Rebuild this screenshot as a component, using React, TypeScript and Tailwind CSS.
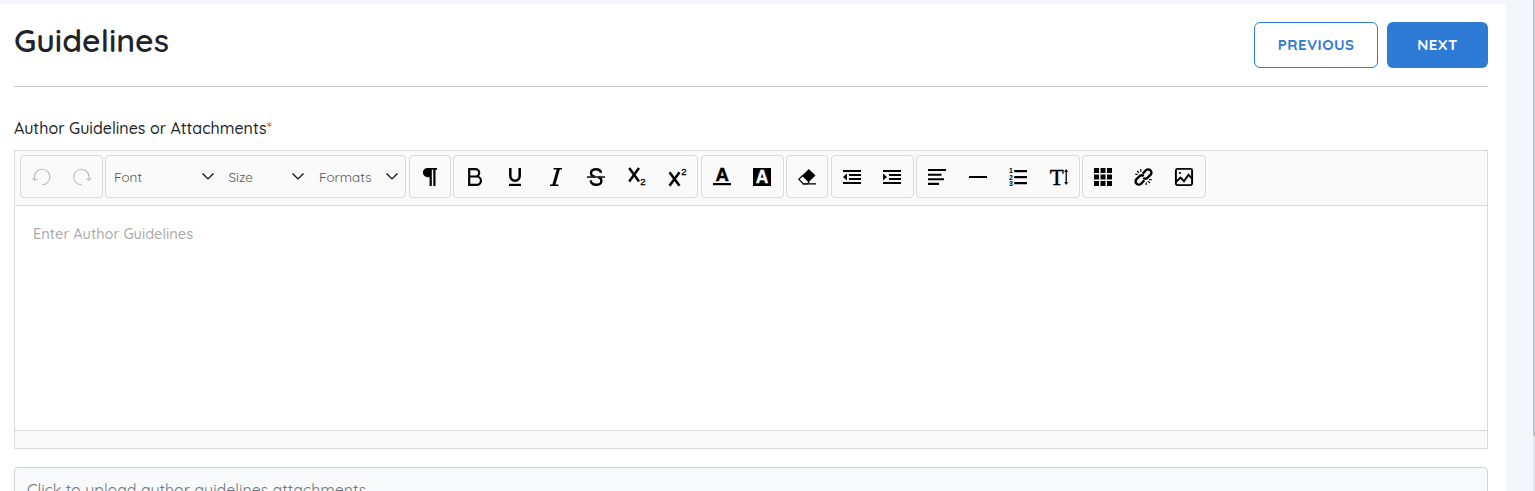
import type { ReactNode } from 'react';

function Icon({ children, className = 'text-black' }: { children: ReactNode; className?: string }) {
  return (
    <svg width="18" height="18" viewBox="0 0 18 18" fill="currentColor" overflow="visible" className={className} aria-hidden="true">
      {children}
    </svg>
  );
}

const sans = "'Liberation Sans', Arial, sans-serif";
const serif = "'Liberation Serif', 'Times New Roman', serif";

const line = { fill: 'none', stroke: 'currentColor' };

const undo = (
  <Icon className="text-[#bdbdbd]">
    <path {...line} strokeWidth="1.1" d="M9.8 16.7A7.7 7.7 0 1 0 2.500 9v3.2M.3 10.2 2.500 12.4l2.8-1.6" />
  </Icon>
);
const redo = (
  <Icon className="text-[#bdbdbd]">
    <path {...line} strokeWidth="1.1" d="M8.7 16.7A7.7 7.7 0 1 1 16 9v3.2M18.2 10.2 16 12.4l-2.8-1.6" />
  </Icon>
);
const pilcrow = (
  <Icon>
    <path d="M6 0H16v1.800h-1.500V18h-2.200V1.800H10.800V18H8.600V9.200H6.500A4.600 4.600 0 0 1 6.500 0z" />
  </Icon>
);
const bold = (
  <Icon>
    <path {...line} strokeWidth="2.200" d="M3.200 1.100H9.500a3.600 3.600 0 0 1 0 7.400H3.200M9.500 8.500h1.200a4.200 4.200 0 0 1 0 8.400H3.200V0" />
  </Icon>
);
const underline = (
  <Icon>
    <path {...line} strokeWidth="2.500" d="M4.300 0v8a4.700 4.700 0 0 0 9.400 0V0" />
    <path d="M3 15.800h12V18H3z" />
  </Icon>
);
const italic = (
  <Icon>
    <path {...line} strokeWidth="1.400" d="M6.500.7H15M3 17.300h8.500" />
    <path {...line} strokeWidth="3" d="M11.500.6 6.700 17.400" />
  </Icon>
);
const strike = (
  <Icon>
    <path {...line} strokeWidth="2.400" d="M14 4.800C13.700 2.400 12 1.200 9 1.200S4 2.600 4 4.900c0 2 1.500 3.300 4 3.800M3.700 12.400c.3 2.900 2.300 4.400 5.500 4.400s5.200-1.500 5.200-3.900c0-1.900-1-3-3.300-3.700" />
    <path d="M0 8.200h18v1.700H0z" fill="#222" />
  </Icon>
);
const subscript = (
  <Icon>
    <path {...line} strokeWidth="2.500" d="M2.200 0 12 13.500M12 0 2.200 13.500" />
    <text x="13.200" y="16.800" fontFamily={sans} fontSize="9.500" stroke="currentColor" strokeWidth=".3">2</text>
  </Icon>
);
const superscript = (
  <Icon>
    <path {...line} strokeWidth="2.500" d="M1.500 4.200 11.500 17.800M11.500 4.200 1.500 17.800" />
    <text x="13.200" y="6.600" fontFamily={sans} fontSize="9.500" stroke="currentColor" strokeWidth=".3">2</text>
  </Icon>
);
const fontColor = (
  <Icon>
    <text x="9.200" y="13.300" textAnchor="middle" fontFamily={sans} fontSize="18.500" fontWeight="700" stroke="currentColor" strokeWidth=".4">A</text>
    <path d="M0 15h18v2.200H0z" />
  </Icon>
);
const highlight = (
  <Icon>
    <path d="M0 0h18v18H0z" />
    <text x="9" y="15.400" textAnchor="middle" fontFamily={sans} fontSize="17.500" fontWeight="700" fill="#fff" stroke="#fff" strokeWidth=".3">A</text>
  </Icon>
);
const eraser = (
  <Icon>
    <path d="M10.800 1 17.500 7.500 10.500 14.300 4 7.700z" />
    <path {...line} strokeWidth="1.200" d="M5 7.200.8 11.200l4.500 4.600h3.900l2-2" />
    <path d="M4.700 15.100H18v1.500H4.700z" fill="#222" />
  </Icon>
);
const outdent = (
  <Icon>
    <path d="M0 2h18v2H0zM6 6h12v2H6zM6 10h12v2H6zM0 14h18v2H0zM4 5.500v7L0 9z" />
  </Icon>
);
const indent = (
  <Icon>
    <path d="M0 2h18v2H0zM6 6h12v2H6zM6 10h12v2H6zM0 14h18v2H0zM0 5.500v7L4 9z" />
  </Icon>
);
const align = (
  <Icon>
    <path d="M0 1h18v2.100H0zM0 5.700h13.500v2.100H0zM0 10.200h16v2.100H0zM0 14.800h11v2.100H0z" />
  </Icon>
);
const rule = (
  <Icon>
    <path d="M0 8h18v2H0z" />
  </Icon>
);
const list = (
  <Icon>
    <path d="M5.200 2H18v2.200H5.200zM5.200 8H18v2.200H5.200zM5.200 14H18v2.200H5.200z" />
    <g fontFamily={sans} fontSize="7" fontWeight="700">
      <text x="0" y="5">1</text>
      <text x="0" y="11.500">2</text>
      <text x="0" y="18">3</text>
    </g>
  </Icon>
);
const lineHeight = (
  <Icon>
    <text x="-.3" y="16.700" fontFamily={serif} fontSize="23" stroke="currentColor" strokeWidth=".4">T</text>
    <path {...line} strokeWidth="1.300" d="M16.200 2v14" />
    <path d="M14.200 4 16.200 1l2 3zM14.200 14 16.200 17l2-3z" />
  </Icon>
);
const table = (
  <Icon>
    <path d="M0 0h5v5H0zM6.500 0h5v5h-5zM13 0h5v5h-5zM0 6.500h5v5H0zM6.500 6.500h5v5h-5zM13 6.500h5v5h-5zM0 13h5v5H0zM6.500 13h5v5h-5zM13 13h5v5h-5z" />
  </Icon>
);
const link = (
  <Icon>
    <g transform="translate(.5 0)">
      <path {...line} strokeWidth="2.400" d="M8.200 5.700 11.400 2.300A3.200 3.200 0 0 1 16 6.800l-2.900 2.900a3.300 3.300 0 0 1-4.300.2M9.800 12.300 6.600 15.700A3.200 3.200 0 0 1 2 11.200l2.900-2.900a3.300 3.300 0 0 1 4.300-.2" />
      <path {...line} strokeWidth="1.200" d="M6.300 1v2.700M2.600 2.800l2 2.100M.8 6.300h2.500M11.700 14.300V17M13.500 13.100l2 2.100M14.700 11.700h2.500" />
    </g>
  </Icon>
);
const image = (
  <Icon>
    <rect x=".9" y=".9" width="16.200" height="16.200" rx="1.500" {...line} strokeWidth="1.900" />
    <path {...line} strokeWidth="1.900" d="m1.500 13.500 4-4 3.500 3.700 4.500-6.500 3.500 4" />
    <circle cx="5" cy="5" r="1.100" />
  </Icon>
);

const groups: { width: string; icons: ReactNode[] }[] = [
  { width: 'w-[42px] ml-[3px]', icons: [pilcrow] },
  { width: 'w-[245px] ml-[2px] pl-px', icons: [bold, underline, italic, strike, subscript, superscript] },
  { width: 'w-[83px] ml-[3px] pr-px', icons: [fontColor, highlight] },
  { width: 'w-[42px] ml-[2px]', icons: [eraser] },
  { width: 'w-[83px] ml-[3px] pr-px', icons: [outdent, indent] },
  { width: 'w-[164px] ml-[2px]', icons: [align, rule, list, lineHeight] },
  { width: 'w-[124px] ml-[2px] pr-px', icons: [table, link, image] },
];

function Group({ width, icons }: { width: string; icons: ReactNode[] }) {
  return (
    <div className={`flex h-[43px] shrink-0 rounded border border-[#dadada] ${width}`}>
      {icons.map((icon, i) => (
        <button key={i} type="button" className="flex flex-1 items-center justify-center pb-px pt-0.5">
          {icon}
        </button>
      ))}
    </div>
  );
}

function Select({ label, className }: { label: string; className: string }) {
  return (
    <button type="button" className={`flex items-center justify-between text-[13.5px] font-normal text-[#555] ${className}`}>
      <span className="pt-0.5">{label}</span>
      <svg width="12" height="7" viewBox="0 0 12 7" fill="none" stroke="#111" strokeWidth="1.4" aria-hidden="true">
        <path d="m.5.6 5.500 5.300L11.500.6" />
      </svg>
    </button>
  );
}

export default function App() {
  return (
    <div className="flex h-[491px] w-full overflow-hidden bg-[#f4f6fb] font-['Quicksand','Lato',sans-serif] text-[#212529]">
      <main className="mt-1 w-[1506px] shrink-0 rounded-tr bg-white pl-3.5 pr-[18px]">
        <header className="flex h-[83px] items-start justify-between border-b border-[#c5c5c5] pt-[18px]">
          <h1 className="text-[32px] font-semibold leading-[37px]">Guidelines</h1>
          <div className="flex gap-[9px] text-[15px] font-bold">
            <button type="button" className="h-[46px] w-[124px] rounded-md border border-[#2e7bd5] tracking-[0.45px] text-[#2e7bd5]">
              PREVIOUS
            </button>
            <button type="button" className="h-[46px] w-[101px] rounded-md bg-[#2e7bd5] tracking-[0.45px] text-white">
              NEXT
            </button>
          </div>
        </header>

        <label className="mt-[29px] block h-6 text-[16px] font-medium leading-6 tracking-[0.01px]">
          Author Guidelines or Attachments<span className="text-[#f4503a]">*</span>
        </label>

        <section className="mt-[10px] flex h-[299px] flex-col border border-[#dadada]">
          <div className="flex h-[55px] shrink-0 border-b border-[#dadada] bg-[#fafafa] pl-[5px] pt-1">
            <Group width="w-[83px]" icons={[undo, redo]} />
            <div className="ml-[2px] flex h-[43px] w-[301px] shrink-0 rounded border border-[#dadada] pl-2">
              <Select label="Font" className="w-[99.5px]" />
              <Select label="Size" className="ml-[15px] w-[75px]" />
              <Select label="Formats" className="ml-[15.5px] w-[78.5px]" />
            </div>
            {groups.map((g, i) => (
              <Group key={i} width={g.width} icons={g.icons} />
            ))}
          </div>
          <div className="flex-1 px-[18px] pt-[17px] text-[14.6px] font-medium leading-[22px] text-[#aaa]">
            Enter Author Guidelines
          </div>
          <div className="h-[18px] shrink-0 border-t border-[#dadada] bg-[#fafafa]" />
        </section>

        <div className="mt-[18px] h-12 rounded border border-[#ced4da] bg-[#f8f9fb] px-3 pt-[10px] text-[16px] leading-6 text-[#6c757d]">
          Click to upload author guidelines attachments
        </div>
      </main>
      <div className="ml-auto w-[2px] bg-[#e8e8e8]">
        <div className="h-[436px] bg-[#c1c1c1]" />
      </div>
    </div>
  );
}
